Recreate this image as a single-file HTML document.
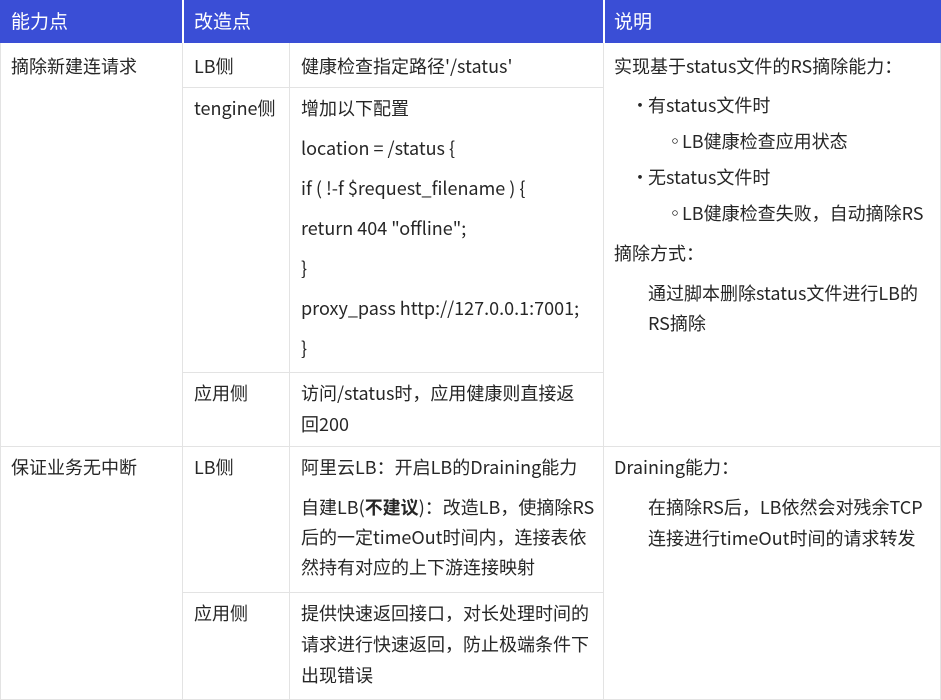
<!DOCTYPE html>
<html><head><meta charset="utf-8"><style>
body{margin:0;width:941px;height:700px;background:#fff;position:relative;overflow:hidden;font-family:"Noto Sans CJK SC","Liberation Sans",sans-serif;font-size:18px;color:#262626}
.t{position:absolute;white-space:nowrap;line-height:24px}
.h{position:absolute;background:#e3e3e3;height:1px}
.v{position:absolute;background:#e3e3e3;width:1px}
.hd{position:absolute;left:0;top:0;width:941px;height:43px;background:#3a4ed6}
.w{color:#fff;font-size:19px}
</style></head><body>
<div class="hd"></div>
<div style="position:absolute;left:182px;top:0;width:2px;height:43px;background:#fff"></div>
<div style="position:absolute;left:603px;top:0;width:2px;height:43px;background:#fff"></div>
<div class="t w" style="left:11px;top:9px">能力点</div>
<div class="t w" style="left:194px;top:9px">改造点</div>
<div class="t w" style="left:614px;top:9px">说明</div>

<div class="v" style="left:0;top:43px;height:657px"></div>
<div class="v" style="left:182px;top:43px;height:657px"></div>
<div class="v" style="left:289px;top:43px;height:657px"></div>
<div class="v" style="left:603px;top:43px;height:657px"></div>
<div class="v" style="left:940px;top:43px;height:657px"></div>
<div class="h" style="left:182px;top:87px;width:421px"></div>
<div class="h" style="left:182px;top:372px;width:421px"></div>
<div class="h" style="left:0;top:446px;width:941px"></div>
<div class="h" style="left:182px;top:592px;width:421px"></div>
<div class="h" style="left:0;top:699px;width:941px"></div>

<div class="t" style="left:11px;top:54px">摘除新建连请求</div>
<div class="t" style="left:194px;top:54px">LB侧</div>
<div class="t" style="left:301px;top:54px">健康检查指定路径'/status'</div>
<div class="t" style="left:194px;top:96px">tengine侧</div>
<div class="t" style="left:301px;top:96px">增加以下配置</div>
<div class="t" style="left:301px;top:136px">location = /status {</div>
<div class="t" style="left:301px;top:176px">if ( !-f $request_filename ) {</div>
<div class="t" style="left:301px;top:216px">return 404 "offline";</div>
<div class="t" style="left:301px;top:256px">}</div>
<div class="t" style="left:301px;top:296px">proxy_pass http://127.0.0.1:7001;</div>
<div class="t" style="left:301px;top:336px">}</div>
<div class="t" style="left:194px;top:381px">应用侧</div>
<div class="t" style="left:301px;top:381px">访问/status时，应用健康则直接返</div>
<div class="t" style="left:301px;top:412px">回200</div>

<div class="t" style="left:614px;top:54px">实现基于status文件的RS摘除能力：</div>
<div class="t" style="left:631px;top:93px">•</div>
<div class="t" style="left:648px;top:93px">有status文件时</div>
<div class="t" style="left:666px;top:129px">◦</div>
<div class="t" style="left:682px;top:129px">LB健康检查应用状态</div>
<div class="t" style="left:631px;top:165px">•</div>
<div class="t" style="left:648px;top:165px">无status文件时</div>
<div class="t" style="left:666px;top:201px">◦</div>
<div class="t" style="left:682px;top:201px">LB健康检查失败，自动摘除RS</div>
<div class="t" style="left:614px;top:241px">摘除方式：</div>
<div class="t" style="left:648px;top:281px">通过脚本删除status文件进行LB的</div>
<div class="t" style="left:648px;top:311px">RS摘除</div>

<div class="t" style="left:11px;top:455px">保证业务无中断</div>
<div class="t" style="left:194px;top:455px">LB侧</div>
<div class="t" style="left:301px;top:455px">阿里云LB：开启LB的Draining能力</div>
<div class="t" style="left:301px;top:495px">自建LB(<b>不建议</b>)：改造LB，使摘除RS</div>
<div class="t" style="left:301px;top:525px">后的一定timeOut时间内，连接表依</div>
<div class="t" style="left:301px;top:555px">然持有对应的上下游连接映射</div>
<div class="t" style="left:194px;top:601px">应用侧</div>
<div class="t" style="left:301px;top:601px">提供快速返回接口，对长处理时间的</div>
<div class="t" style="left:301px;top:632px">请求进行快速返回，防止极端条件下</div>
<div class="t" style="left:301px;top:663px">出现错误</div>
<div class="t" style="left:614px;top:455px">Draining能力：</div>
<div class="t" style="left:648px;top:495px">在摘除RS后，LB依然会对残余TCP</div>
<div class="t" style="left:648px;top:526px">连接进行timeOut时间的请求转发</div>
</body></html>
